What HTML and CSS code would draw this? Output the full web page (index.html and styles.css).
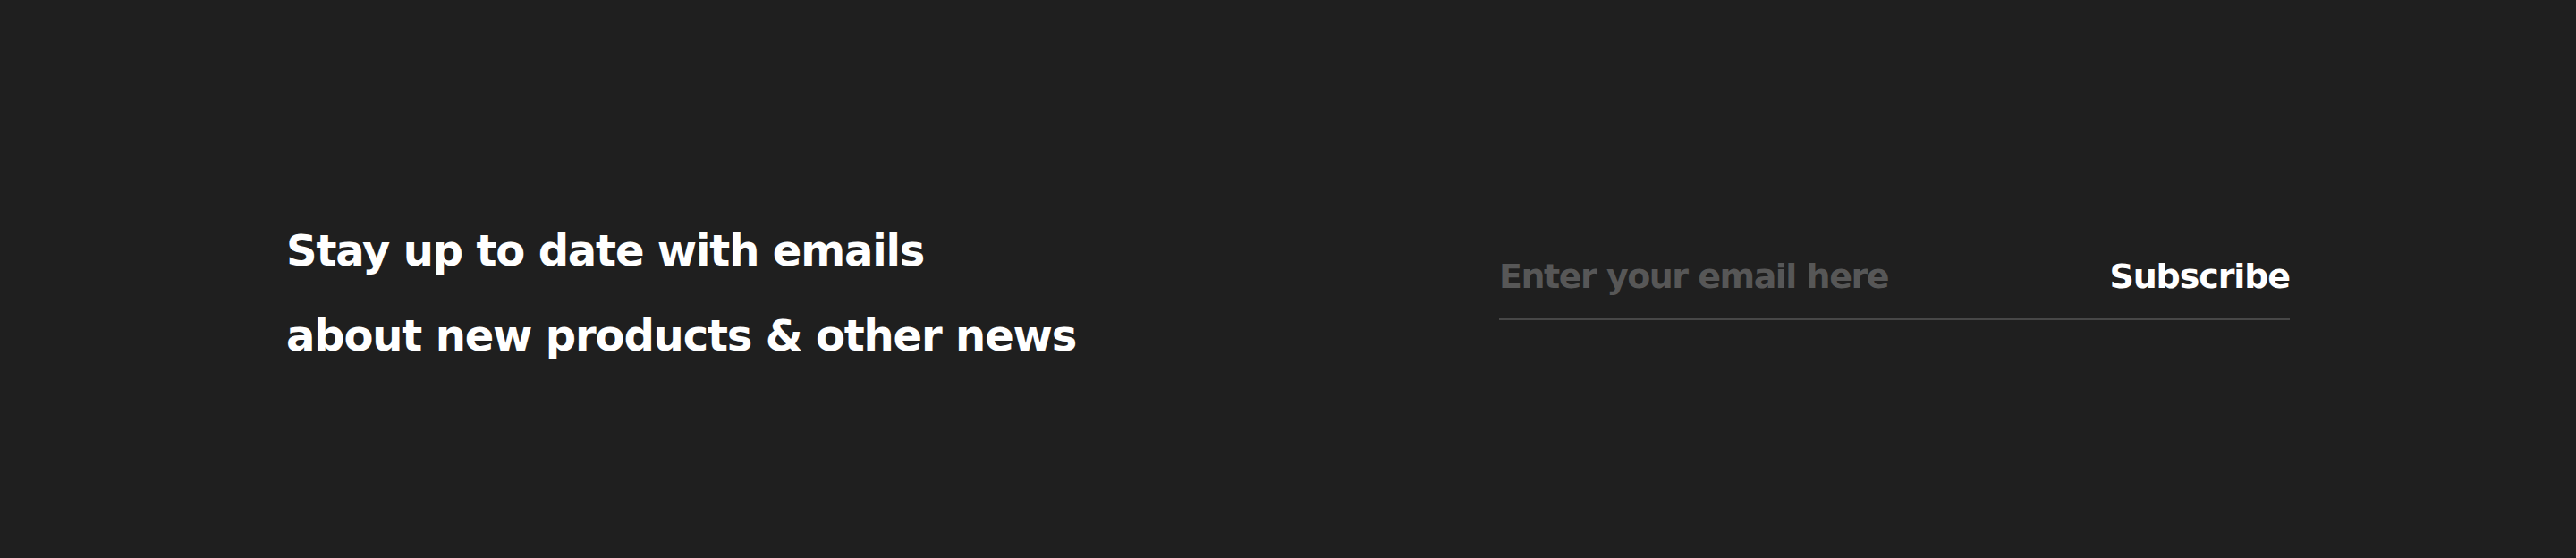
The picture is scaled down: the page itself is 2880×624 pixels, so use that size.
FILE: index.html
```html
<!DOCTYPE html>
<html lang="en">
<head>
<meta charset="utf-8">
<title>Newsletter</title>
<link rel="stylesheet" href="styles.css">
</head>
<body>
<section class="newsletter">
  <h2 class="newsletter-title">Stay up to date with emails<br>about new products &amp; other news</h2>
  <form class="newsletter-form" onsubmit="return false;">
    <input class="newsletter-input" type="email" placeholder="Enter your email here">
    <button class="newsletter-button" type="submit">Subscribe</button>
  </form>
</section>
</body>
</html>
```

FILE: styles.css
```css
html, body {
  margin: 0;
  padding: 0;
  background: #1f1f1f;
}

body {
  width: 2880px;
  height: 624px;
  overflow: hidden;
  font-family: "DejaVu Sans", "Noto Sans", sans-serif;
}

.newsletter {
  box-sizing: border-box;
  height: 624px;
  display: flex;
  justify-content: space-between;
  align-items: flex-start;
  padding: 233px 320px 0 320px;
}

.newsletter-title {
  margin: 0;
  color: #ffffff;
  font-size: 48px;
  font-weight: 700;
  line-height: 95px;
  letter-spacing: -1.15px;
}

.newsletter-form {
  box-sizing: border-box;
  width: 884px;
  margin: 53px 0 0 0;
  display: flex;
  align-items: center;
  justify-content: space-between;
  padding-bottom: 24px;
  border-bottom: 2px solid #474747;
}

.newsletter-input {
  flex: 1;
  height: 46px;
  padding: 0;
  margin: 0;
  border: none;
  outline: none;
  background: transparent;
  color: #ffffff;
  font-family: inherit;
  font-size: 38px;
  font-weight: 700;
  line-height: 46px;
  letter-spacing: -1.5px;
}

.newsletter-input::placeholder {
  color: #575757;
  opacity: 1;
}

.newsletter-button {
  height: 46px;
  padding: 0;
  margin: 0;
  border: none;
  background: transparent;
  color: #ffffff;
  font-family: inherit;
  font-size: 38px;
  font-weight: 700;
  line-height: 46px;
  letter-spacing: -1.1px;
  cursor: pointer;
}
```
